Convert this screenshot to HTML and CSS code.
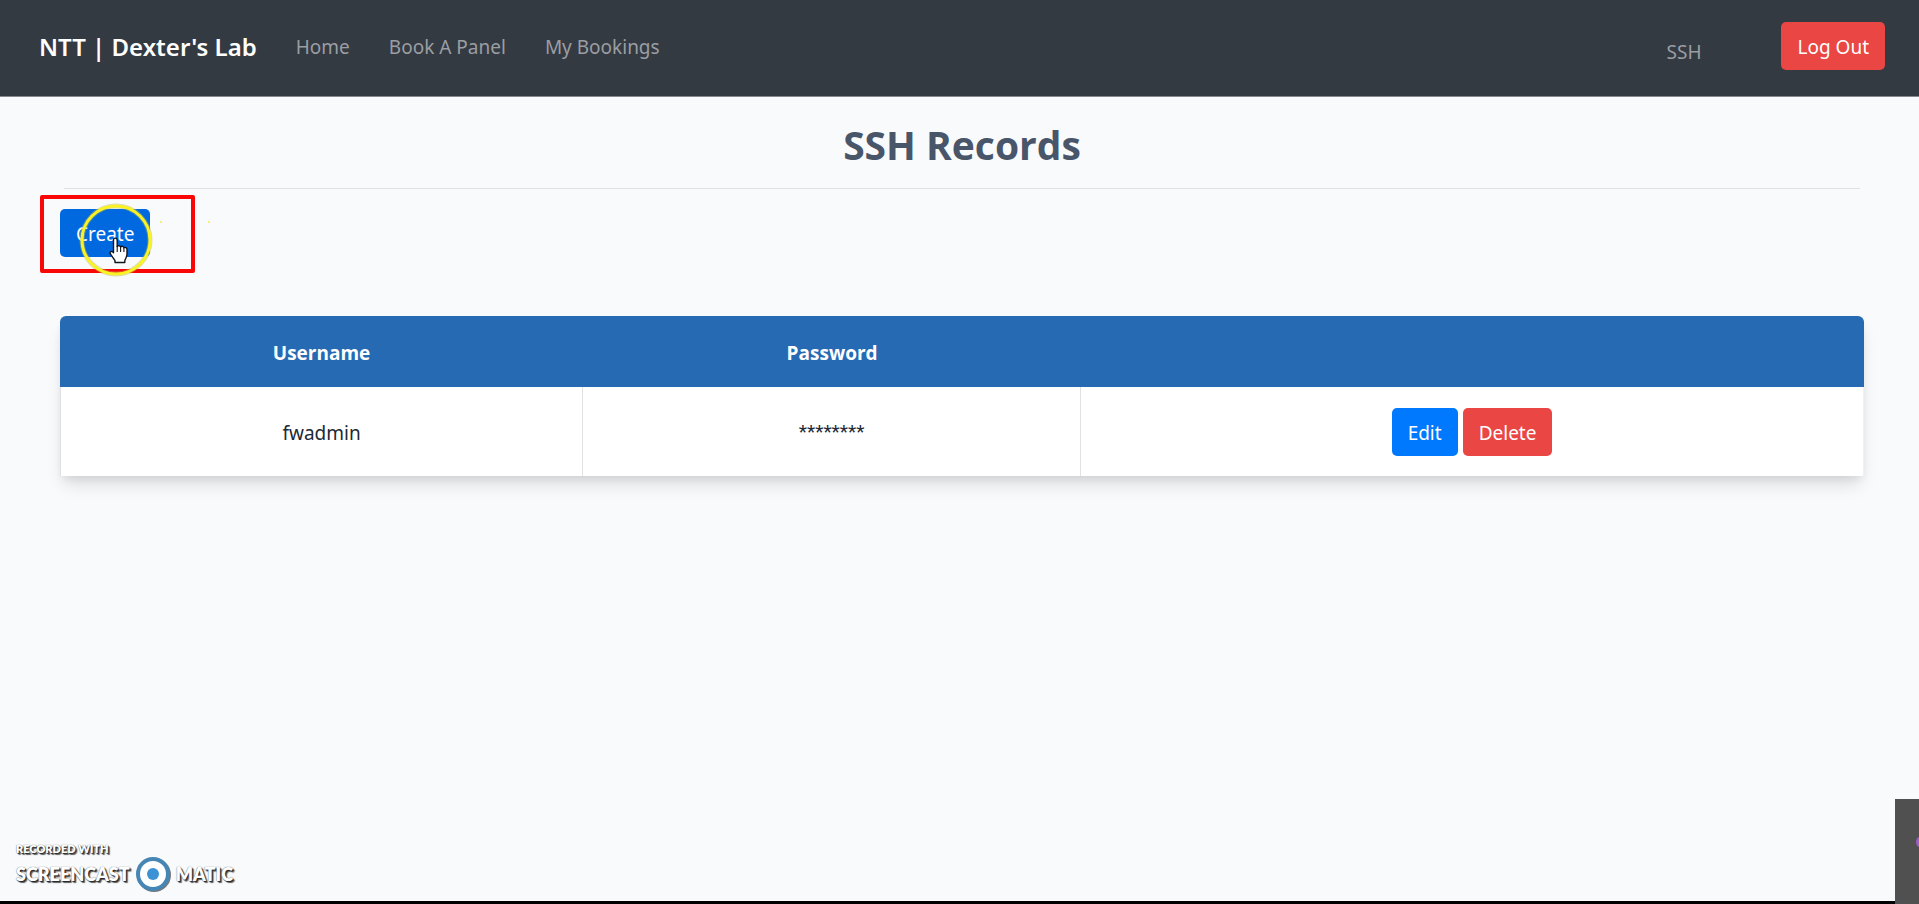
FILE: index.html
```
<!DOCTYPE html>
<html lang="en">
<head>
<meta charset="utf-8">
<meta name="viewport" content="width=device-width, initial-scale=1">
<title>SSH Records</title>
<link rel="stylesheet" href="styles.css">
</head>
<body class="page">
<header class="navbar">
  <a class="brand" href="#">NTT | Dexter's Lab</a>
  <nav class="nav-links">
    <a href="#">Home</a>
    <a href="#">Book A Panel</a>
    <a href="#">My Bookings</a>
  </nav>
  <div class="account">
    <a class="ssh-link" href="#">SSH</a>
    <button class="btn btn-danger" type="button">Log Out</button>
  </div>
</header>
<main class="content">
  <h1 class="title">SSH Records</h1>
  <hr class="divider">
  <div class="toolbar">
    <button class="btn btn-create" type="button">Create</button>
    <div class="highlight"></div>
    <svg class="pointer" viewBox="0 0 76 76" width="76" height="76" aria-hidden="true">
      <circle cx="38" cy="38" r="34" fill="none" stroke="#bdbd55" stroke-opacity=".45" stroke-width="5"/>
      <circle cx="38" cy="38" r="34" fill="none" stroke="#fbf223" stroke-width="3"/>
      <path d="M36 36.500c1.500-1 3.200 0 3.200 1.800v6.200c1-1.300 3-1 3.400.4 1-1 2.900-.7 3.300.8 1.200-.8 3.100 0 3.100 1.900v4.300c0 3-1.500 4.500-2.200 6.800v1.800H37v-1.800c-1.200-2.200-3.200-4.400-4.700-7-.9-1.500.9-2.900 2.300-1.900l.9 1V38c0-.6.100-1.100.5-1.500z" fill="#fff" stroke="#10151c" stroke-width="1.400" stroke-linejoin="round"/>
      <path d="M39.200 44v6M42.600 45v5M45.900 46v4" fill="none" stroke="#10151c" stroke-width="1.100"/>
    </svg>
    <i class="spark spark-near"></i>
    <i class="spark spark-far"></i>
  </div>
  <table class="records">
    <thead>
      <tr><th class="col-user" scope="col">Username</th><th class="col-pass" scope="col">Password</th><td></td></tr>
    </thead>
    <tbody>
      <tr>
        <td>fwadmin</td>
        <td class="masked">********</td>
        <td>
          <div class="actions">
            <button class="btn btn-primary" type="button">Edit</button>
            <button class="btn btn-danger" type="button">Delete</button>
          </div>
        </td>
      </tr>
    </tbody>
  </table>
</main>
<div class="watermark">
  <span class="wm-small">RECORDED WITH</span>
  <div class="wm-row">
    <span>SCREENCAST</span>
    <svg viewBox="0 0 38 38" width="38" height="38" aria-hidden="true">
      <circle cx="20" cy="20" r="15" fill="none" stroke="#222" stroke-opacity=".6" stroke-width="4"/>
      <circle cx="19" cy="19" r="15" fill="#fff" stroke="#4686b4" stroke-width="4"/>
      <circle cx="19" cy="19" r="6" fill="#3b93d6"/>
    </svg>
    <span>MATIC</span>
  </div>
</div>
<div class="bottom-bar"></div>
<div class="side-panel"><i class="side-dot"></i></div>
</body>
</html>
```
FILE: styles.css
```
* { box-sizing: border-box; }
.page {
  margin: 0;
  min-height: 100vh;
  position: relative;
  overflow: hidden;
  background: #f9fafb;
  color: #212936;
  font-family: "Noto Sans", "Open Sans", sans-serif;
  font-size: 19px;
  line-height: 28px;
}
a { text-decoration: none; }
.navbar {
  display: flex;
  align-items: center;
  height: 97px;
  padding: 0 34px 2px 39px;
  background: #343a42;
  border-bottom: 1px solid #85888d;
}
.brand { color: #fff; font-size: 24px; font-weight: 600; }
.nav-links { display: flex; gap: 39px; margin-left: 39px; }
.nav-links a, .ssh-link { color: #9b9ea2; }
.account { display: flex; align-items: center; gap: 80px; margin-left: auto; padding-bottom: 2px; }
.ssh-link { padding-top: 12px; }
.btn {
  height: 48px;
  padding: 2px 16px 0;
  border: 0;
  border-radius: 5px;
  color: #fff;
  font: inherit;
}
.btn-danger { background: #e94644; }
.btn-primary { background: #0079ff; }
.btn-create { background: #0069e0; }
.content { padding: 23px 55px 0 60px; }
.title {
  margin: 0;
  color: #49566a;
  font-family: "Open Sans", sans-serif;
  font-size: 39px;
  font-weight: 700;
  line-height: 50px;
  text-align: center;
}
.divider { margin: 18px 4px 20px; border: 0; border-top: 1px solid #e0e1e2; }
.toolbar { position: relative; height: 107px; }
.highlight {
  position: absolute;
  left: -20px;
  top: -14px;
  width: 155px;
  height: 78px;
  border: 4px solid #f90707;
  border-radius: 2px;
}
.pointer { position: absolute; left: 18px; top: -7px; }
.spark { position: absolute; top: 12px; width: 2px; height: 2px; background: #f1f27a; }
.spark-near { left: 100px; }
.spark-far { left: 148px; }
.records {
  width: 100%;
  table-layout: fixed;
  border-spacing: 0;
  border-radius: 6px 6px 0 0;
  background: #fff;
  box-shadow: 0 12px 18px -4px rgba(0, 0, 0, .12), 0 5px 8px -2px rgba(0, 0, 0, .07);
  text-align: center;
}
.col-user { width: 29%; }
.col-pass { width: 27.600%; }
.records thead th, .records thead td {
  height: 71px;
  padding: 2px 0 0;
  background: #266ab3;
  color: #fff;
  font-family: "Open Sans", sans-serif;
  font-weight: 700;
}
.records thead tr > :first-child { border-top-left-radius: 6px; }
.records thead tr > :last-child { border-top-right-radius: 6px; }
.records tbody td { height: 89px; padding: 0; border-right: 1px solid #dfe2e5; }
.records tbody td:first-child { padding-top: 2px; border-left: 1px solid #dfe2e5; }
.records tbody td:last-child { border-right-color: #eff1f3; }
.records .masked { font-family: Roboto, sans-serif; }
.actions { display: flex; justify-content: center; gap: 5px; }
.watermark {
  position: absolute;
  left: 16px;
  bottom: 11px;
  color: #fff;
  font-family: Lato, sans-serif;
  font-size: 18px;
  font-weight: 800;
  line-height: 20px;
  text-shadow: 0 0 1px #444, 1px 1px 1px #222, 2px 2px 1px #666;
}
.wm-small { display: block; font-size: 11px; line-height: 12px; }
.wm-row { display: flex; align-items: center; gap: 4px; }
.bottom-bar { position: absolute; left: 0; right: 0; bottom: 0; height: 3px; background: #000; }
.side-panel {
  position: absolute;
  right: 0;
  bottom: 0;
  width: 24px;
  height: 105px;
  overflow: hidden;
  background: #505050;
}
.side-dot {
  position: absolute;
  right: -4px;
  top: 38px;
  width: 7px;
  height: 10px;
  border-radius: 50%;
  background: #9a5fc0;
}
```
